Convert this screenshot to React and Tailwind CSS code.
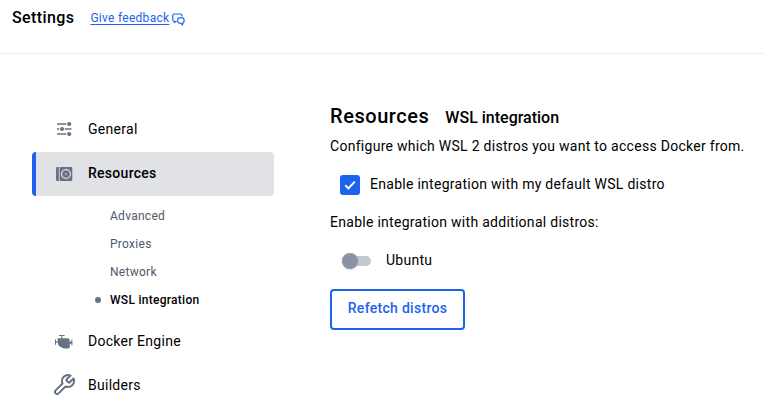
import React from 'react';

const GeneralIcon = () => (
  <svg width="20" height="20" viewBox="0 0 20 20" fill="#677285">
    <path d="M3 4.300h9.300v1.400H3zM3 9.300h2.200v1.400H3zM10.800 9.300h6.700v1.400h-6.700zM3 14.300h9.300v1.400H3z" />
    <circle cx="15.200" cy="5" r="2.100" />
    <circle cx="8" cy="10" r="2.100" />
    <circle cx="15.200" cy="15" r="2.100" />
  </svg>
);

const ResourcesIcon = () => (
  <svg width="20" height="20" viewBox="0 0 20 20" fill="#677285">
    <path d="M3.200 3H4.800v14H3.200A1.200 1.200 0 0 1 2 15.800V4.200A1.200 1.200 0 0 1 3.200 3z" />
    <path d="M5.600 3H17A1.300 1.300 0 0 1 18.300 4.300V15.700A1.300 1.300 0 0 1 17 17H5.600z" />
    <circle cx="12" cy="10" r="4.400" fill="none" stroke="#e1e2e6" strokeWidth="1.200" />
    <circle cx="12" cy="10" r="1.200" fill="#a5abb7" />
  </svg>
);

const EngineIcon = () => (
  <svg width="20" height="20" viewBox="0 0 20 20" fill="#677285">
    <path d="M5 4h5.600v1H8.300V7.200H14.200L15.600 8.600V10.600H17.400V8.600H18.400V14.600H17.400V12.800H15.800V16.400L14 17.400H9.800L5.600 15.600L4 13.600V11.800H2V13.800H1V8.600H2V10.600H3.600V7.200H7.300V5H5z" />
  </svg>
);

const WrenchIcon = () => (
  <svg className="shrink-0" width="24" height="24" viewBox="0 0 24 24" fill="none" stroke="#677285" strokeWidth="2" strokeLinejoin="round" strokeLinecap="round">
    <path d="M14.700 6.300a1 1 0 0 0 0 1.400l1.600 1.600a1 1 0 0 0 1.400 0l3.770-3.770a6 6 0 0 1-7.940 7.940l-6.910 6.910a2.120 2.120 0 0 1-3-3l6.910-6.910a6 6 0 0 1 7.940-7.940l-3.760 3.760z" />
  </svg>
);

const FeedbackIcon = () => (
  <svg width="13" height="13" viewBox="0 0 13 13" fill="none" stroke="#1d63ed" strokeWidth="1.200" strokeLinejoin="round">
    <path d="M4.600 8.300H4L2.300 9.600V8.300A1.500 1.500 0 0 1 .8 6.800V2.500A1.500 1.500 0 0 1 2.300 1H8.500A1.500 1.500 0 0 1 10 2.500V3.600" />
    <path d="M7.200 4.900H10.500A1.500 1.500 0 0 1 12 6.400V8.600A1.500 1.500 0 0 1 10.600 10V12L8.700 10.100H7.200A1.500 1.500 0 0 1 5.700 8.600V6.400A1.500 1.500 0 0 1 7.200 4.900z" />
  </svg>
);

const NavItem = ({ icon, label, active }) => (
  <div
    className={
      active
        ? 'flex h-11 items-center rounded-[4px] border-l-4 border-[#1d63ed] bg-[#e1e2e6] pb-0.5 pl-[18px]'
        : 'flex h-11 items-center pl-[22px]'
    }
  >
    <span className={active ? 'mt-0.5 flex w-5 shrink-0 items-center justify-center' : 'flex w-5 shrink-0 items-center justify-center'}>
      {icon}
    </span>
    <span className={active ? 'ml-[14px] text-sm font-medium tracking-[0.28px]' : 'ml-[14px] text-sm tracking-[0.28px]'}>
      {label}
    </span>
  </div>
);

const SubItem = ({ label, active }) => (
  <li className="flex h-7 items-center pl-[63px]">
    <span className={active ? 'size-1.5 rounded-full bg-[#677285]' : 'size-1.5'} />
    <span className={active ? 'ml-[9px] text-xs font-medium tracking-[0.28px]' : 'ml-[9px] text-xs tracking-[0.28px] text-[#505968]'}>
      {label}
    </span>
  </li>
);

export default function App() {
  return (
    <div className="h-[403px] w-[764px] overflow-hidden bg-white font-[Roboto,sans-serif] text-black">
      <header className="flex h-[54px] border-b border-[#ededf0] pl-3 pt-1.5">
        <h1 className="text-base leading-6 font-medium tracking-[0.4px]">Settings</h1>
        <a className="ml-4 flex h-6 items-center text-xs tracking-[0.28px] text-[#1d63ed]">
          <span className="underline underline-offset-2">Give feedback</span>
          <span className="ml-[3px] mt-0.5"><FeedbackIcon /></span>
        </a>
      </header>
      <div className="flex">
        <nav className="ml-8 w-[242px] shrink-0 pt-[53px]">
          <NavItem icon={<GeneralIcon />} label="General" />
          <div className="pt-px">
            <NavItem icon={<ResourcesIcon />} label="Resources" active />
          </div>
          <ul className="pt-1.5 pb-[5px]">
            <SubItem label="Advanced" />
            <SubItem label="Proxies" />
            <SubItem label="Network" />
            <SubItem label="WSL integration" active />
          </ul>
          <NavItem icon={<EngineIcon />} label="Docker Engine" />
          <NavItem icon={<WrenchIcon />} label="Builders" />
        </nav>
        <main className="ml-14 pt-[46px] text-sm tracking-[0.28px] whitespace-nowrap">
          <div className="flex h-8 items-baseline gap-4">
            <h2 className="text-xl leading-8 font-medium tracking-[0.55px]">Resources</h2>
            <h3 className="text-base font-medium tracking-normal">WSL integration</h3>
          </div>
          <p className="mt-1 leading-5">Configure which WSL 2 distros you want to access Docker from.</p>
          <div className="mt-[18px] flex h-5 items-center pl-2.5">
            <span className="mt-0.5 flex size-5 items-center justify-center rounded-[3px] bg-[#1d63ed]">
              <svg width="12" height="10" viewBox="0 0 12 10" fill="none" stroke="white" strokeWidth="1.900">
                <path d="M1.200 5.200L4.400 8.300L10.800 1.700" />
              </svg>
            </span>
            <span className="ml-2.5">Enable integration with my default WSL distro</span>
          </div>
          <p className="mt-[18px] leading-5">Enable integration with additional distros:</p>
          <div className="mt-[18px] flex h-5 items-center pl-3">
            <span className="mt-0.5 flex h-2.5 w-[29px] items-center rounded-full bg-[#c4c8d1]">
              <span className="size-4 rounded-full bg-[#8993a5] shadow-sm" />
            </span>
            <span className="ml-[15px]">Ubuntu</span>
          </div>
          <button className="mt-[19px] h-[41px] w-[135px] rounded-[4px] border-2 border-[#1d63ed] pb-[3px] font-medium tracking-[0.3px] text-[#1d63ed]">
            Refetch distros
          </button>
        </main>
      </div>
    </div>
  );
}
